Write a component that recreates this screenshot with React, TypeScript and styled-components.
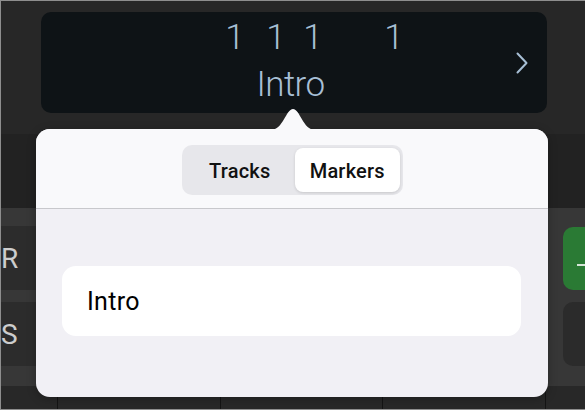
import React from 'react'
import styled, { createGlobalStyle } from 'styled-components'

const GlobalStyle = createGlobalStyle`
  html, body {
    margin: 0;
    padding: 0;
    background: #2a2a2a;
  }
  * {
    box-sizing: border-box;
  }
`

const digits = [
  { value: '1', offset: 151 },
  { value: '1', offset: 21 },
  { value: '1', offset: 17 },
  { value: '1', offset: 61 },
]

const rows = [
  { letter: 'R', tone: 'green' as const },
  { letter: 'S', tone: 'dark' as const },
]

const footerCells = [56, 164, 163, 164]

export default function App() {
  return (
    <S.Frame>
      <GlobalStyle />
      <S.TopBar>
        <S.Display>
          <S.Readout>
            <S.Counter>
              {digits.map((d, i) => (
                <S.Digit key={`digit-${i}`} $offset={d.offset}>
                  {d.value}
                </S.Digit>
              ))}
            </S.Counter>
            <S.MarkerName>Intro</S.MarkerName>
          </S.Readout>
          <S.ChevronBox>
            <svg width="12" height="22" viewBox="0 0 12 22" fill="none">
              <polyline points="1.5,1.5 10.5,11 1.5,20.5" stroke="#a7bfd5" strokeWidth="2" strokeLinecap="round" strokeLinejoin="round" />
            </svg>
          </S.ChevronBox>
        </S.Display>
      </S.TopBar>
      <S.Ruler />
      <S.TrackArea>
        {rows.map(row => (
          <S.TrackRow key={`row-${row.letter}`}>
            <S.TrackHeader>{row.letter}</S.TrackHeader>
            <S.TrackControl $tone={row.tone}>
              {row.tone === 'green' && (
                <svg width="10" height="4" viewBox="0 0 10 4">
                  <rect x="0" y="1" width="10" height="2" fill="#ffffff" />
                </svg>
              )}
            </S.TrackControl>
          </S.TrackRow>
        ))}
      </S.TrackArea>
      <S.Footer>
        {footerCells.map((w, i) => (
          <S.FooterCell key={`cell-${i}`} $width={w} $first={i === 0} />
        ))}
        <S.FooterCell $width={40} $first={false} />
      </S.Footer>

      <S.Popover>
        <S.Tail width="44" height="22" viewBox="0 0 44 22">
          <path d="M0,22 C12,22 15,1 22,1 C29,1 32,22 44,22 Z" fill="#f9f9fb" />
        </S.Tail>
        <S.PopoverHeader>
          <S.Segmented>
            <S.Segment $active={false} $width={111}>Tracks</S.Segment>
            <S.Segment $active={true} $width={105}>Markers</S.Segment>
          </S.Segmented>
        </S.PopoverHeader>
        <S.PopoverBody>
          <S.MarkerField>Intro</S.MarkerField>
        </S.PopoverBody>
      </S.Popover>
    </S.Frame>
  )
}

export const S = {
  Frame: styled.div`
    position: relative;
    display: flex;
    flex-direction: column;
    width: 585px;
    height: 410px;
    overflow: hidden;
    background: #2a2a2a;
    border: 1px solid #8e8e8e;
    border-right: none;
    font-family: Roboto, 'Liberation Sans', sans-serif;
  `,
  TopBar: styled.div`
    display: flex;
    height: 133px;
    padding: 11px 0 0 40px;
    background: #272727;
  `,
  Display: styled.div`
    display: flex;
    flex-direction: row;
    align-items: center;
    width: 506px;
    height: 101px;
    border-radius: 10px;
    background: #0e1316;
  `,
  Readout: styled.div`
    display: flex;
    flex-direction: column;
    flex: 1;
    height: 100%;
    padding-left: 33px;
    color: #a7bfd5;
    font-weight: 300;
  `,
  Counter: styled.div`
    display: flex;
    flex-direction: row;
    padding-top: 8px;
    font-size: 35px;
    line-height: 35px;
  `,
  Digit: styled.span<{ $offset: number }>`
    display: inline-block;
    width: 20px;
    margin-left: ${p => p.$offset}px;
    text-align: center;
  `,
  MarkerName: styled.div`
    margin-top: 12px;
    font-size: 35px;
    line-height: 35px;
    letter-spacing: -0.6px;
    text-align: center;
  `,
  ChevronBox: styled.div`
    display: flex;
    align-items: center;
    justify-content: center;
    width: 30px;
    margin-right: 10px;
  `,
  Ruler: styled.div`
    height: 74px;
    background: #222222;
  `,
  TrackArea: styled.div`
    display: flex;
    flex-direction: column;
    gap: 12px;
    height: 178px;
    padding-top: 18px;
    background: #373737;
  `,
  TrackRow: styled.div`
    display: flex;
    flex-direction: row;
    justify-content: space-between;
    height: 64px;
  `,
  TrackHeader: styled.div`
    display: flex;
    align-items: center;
    width: 60px;
    border-radius: 0 9px 9px 0;
    background: #2c2c2c;
    color: #cdcdcd;
    font-size: 28px;
  `,
  TrackControl: styled.div<{ $tone: 'green' | 'dark' }>`
    display: flex;
    align-items: center;
    width: 22px;
    margin-top: ${p => (p.$tone === 'green' ? '1px' : '0')};
    padding: 12px 0 0 14px;
    border-radius: 10px 0 0 10px;
    background: ${p => (p.$tone === 'green' ? '#2a7a34' : '#2b2b2b')};
  `,
  Footer: styled.div`
    display: flex;
    flex-direction: row;
    flex: 1;
    background: #282828;
  `,
  FooterCell: styled.div<{ $width: number; $first: boolean }>`
    width: ${p => p.$width}px;
    border-left: ${p => (p.$first ? 'none' : '1px solid #141414')};
  `,
  Popover: styled.div`
    position: absolute;
    left: 35px;
    top: 128px;
    display: flex;
    flex-direction: column;
    width: 512px;
    height: 268px;
    border-radius: 14px;
    background: #f1f0f5;
    box-shadow: 0 2px 10px rgba(0, 0, 0, 0.25);
  `,
  Tail: styled.svg`
    position: absolute;
    left: 235px;
    top: -21px;
  `,
  PopoverHeader: styled.div`
    display: flex;
    justify-content: center;
    height: 80px;
    padding-top: 16px;
    border-radius: 14px 14px 0 0;
    border-bottom: 1px solid #c8c8cc;
    background: #f9f9fb;
  `,
  Segmented: styled.div`
    display: flex;
    flex-direction: row;
    width: 221px;
    height: 50px;
    padding: 3px;
    border-radius: 10px;
    background: #e7e7eb;
  `,
  Segment: styled.div<{ $active: boolean; $width: number }>`
    display: flex;
    align-items: center;
    justify-content: center;
    width: ${p => p.$width}px;
    padding-top: 1px;
    border-radius: 8px;
    background: ${p => (p.$active ? '#ffffff' : 'transparent')};
    box-shadow: ${p => (p.$active ? '0 1px 3px rgba(0, 0, 0, 0.14)' : 'none')};
    color: #111111;
    font-size: 20px;
    font-weight: 500;
    letter-spacing: 0.2px;
  `,
  PopoverBody: styled.div`
    flex: 1;
    padding: 57px 27px 0 26px;
  `,
  MarkerField: styled.div`
    display: flex;
    align-items: center;
    height: 70px;
    padding-left: 25px;
    border-radius: 14px;
    background: #ffffff;
    color: #000000;
    font-size: 25px;
    letter-spacing: 0.3px;
  `,
}
